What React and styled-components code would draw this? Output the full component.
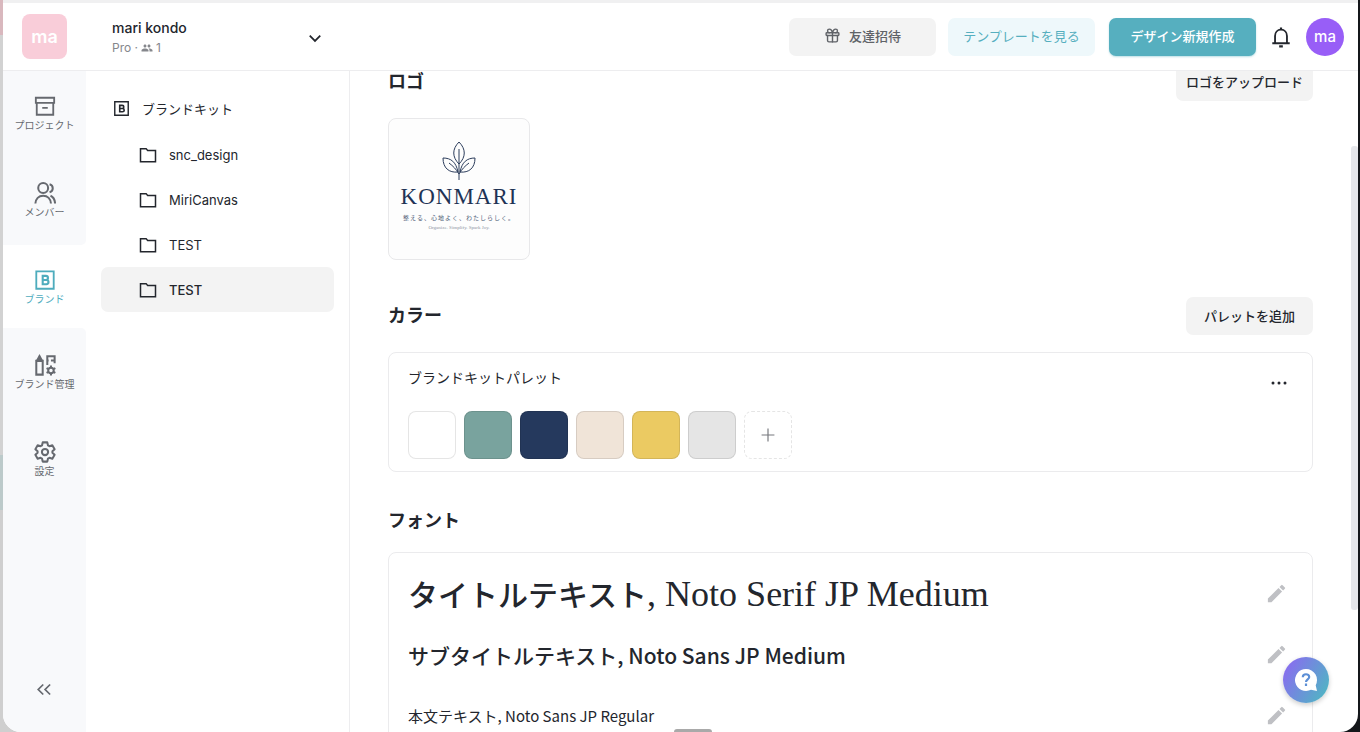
import React from 'react';
import styled, { createGlobalStyle, css } from 'styled-components';
import { LuGift } from 'react-icons/lu';
import { MdEdit, MdPeople } from 'react-icons/md';

const GlobalStyle = createGlobalStyle`
  * { box-sizing: border-box; }
  body {
    margin: 0;
    background: #cfcfcf;
    color: #23262d;
    font-family: Inter, "Noto Sans CJK JP", sans-serif;
    font-size: 14px;
  }
  button { font-family: inherit; border: 0; padding: 0; background: none; color: inherit; cursor: pointer; }
  a { color: inherit; text-decoration: none; }
  h2, p { margin: 0; }
  svg { display: block; flex: none; }
`

const Desktop = styled.div`
  height: 100vh;
  padding: 0 2px 0 3px;
  background: linear-gradient(to right, transparent 50%, #14161a 50%),
    linear-gradient(#d9b8be 0 35px, #d2d2d2 35px 455px, #bccaca 455px 510px, #cfcfcf 510px);
  overflow: hidden;
`

const Window = styled.div`
  position: relative;
  height: 100%;
  display: flex;
  flex-direction: column;
  background: #ffffff;
  border-radius: 0 0 18px 18px;
  overflow: hidden;
`

const Header = styled.header`
  flex: none;
  height: 71px;
  display: flex;
  align-items: center;
  padding: 0 14px 0 19px;
  border-top: 3px solid #f0f0f1;
  border-bottom: 1px solid #ededef;
`

const TeamBadge = styled.div`
  width: 45px;
  height: 45px;
  margin-right: 45px;
  border-radius: 8px;
  background: #f9cdd9;
  color: #ffffff;
  font-size: 18px;
  font-weight: 600;
  line-height: 45px;
  text-align: center;
`

const TeamButton = styled.button`
  width: 210px;
  display: flex;
  align-items: center;
  justify-content: space-between;
  padding-top: 3px;
  text-align: left;
`

const TeamName = styled.span`
  display: block;
  font-size: 14px;
  font-weight: 500;
  line-height: 20px;
`

const TeamPlan = styled.span`
  display: flex;
  align-items: center;
  gap: 3px;
  color: #85878c;
  font-size: 12px;
  line-height: 20px;
`

const HeaderActions = styled.div`
  display: flex;
  align-items: center;
  margin-left: auto;
`

const tones = {
  grey: css`background: #f3f3f3; color: #606368; margin-right: 12px;`,
  light: css`background: #eef8fb; color: #56afbf; margin-right: 14px;`,
  teal: css`background: #56afbf; color: #ffffff; margin-right: 14px; box-shadow: 0 1px 2px #56afbf66;`,
}

const HeaderButton = styled.button`
  width: 147px;
  height: 38px;
  display: flex;
  align-items: center;
  justify-content: center;
  gap: 8px;
  padding-bottom: 2px;
  border-radius: 7px;
  font-size: 13px;
  font-weight: ${({ $tone }) => ($tone === 'light' ? 400 : 500)};
  ${({ $tone }) => tones[$tone]}
`

const Avatar = styled.button`
  width: 38px;
  height: 38px;
  margin-left: 14px;
  border-radius: 50%;
  background: #985ef7;
  color: #ffffff;
  font-size: 15px;
  font-weight: 500;
`

const Body = styled.div`
  flex: 1;
  min-height: 0;
  display: flex;
`

const Rail = styled.nav`
  flex: none;
  width: 83px;
  display: flex;
  flex-direction: column;
`

const RailGroup = styled.div`
  background: #f8f9fb;
  ${({ $last }) => $last
    ? css`flex: 1; display: flex; flex-direction: column; padding-top: 2px; border-top-right-radius: 5px;`
    : css`border-bottom-right-radius: 5px;`}
`

const RailItem = styled.a`
  height: 87px;
  display: flex;
  flex-direction: column;
  align-items: center;
  padding-top: 24px;
  color: ${({ $active }) => ($active ? '#4eacbd' : '#66696f')};
  font-size: 10px;
  line-height: 16px;
  white-space: nowrap;
`

const ActiveGroup = styled.div`
  height: 83px;
`

const Collapse = styled.button`
  margin: auto auto 35px;
  color: #66696f;
`

const Folders = styled.nav`
  flex: none;
  width: 264px;
  padding: 16px 15px;
  border-right: 1px solid #ededef;
`

const FolderLink = styled.a`
  height: 45px;
  display: flex;
  align-items: center;
  gap: 12px;
  padding-left: ${({ $root }) => ($root ? 12 : 38)}px;
  padding-bottom: ${({ $root }) => ($root ? 2 : 0)}px;
  border-radius: 7px;
  background: ${({ $active }) => ($active ? '#f3f3f3' : 'transparent')};
  font-size: 13px;
  font-weight: ${({ $active }) => ($active ? 500 : 400)};
`

const Main = styled.main`
  flex: 1;
  min-width: 0;
  overflow: hidden;
  padding: 0 45px 0 38px;
`

/* the list is scrolled a little, so the first row runs under the header */
const Scrolled = styled.div`
  margin-top: -8px;
`

const SectionHead = styled.div`
  height: 38px;
  display: flex;
  align-items: center;
  justify-content: space-between;
`

const SectionTitle = styled.h2`
  font-size: 18px;
  font-weight: 700;
  line-height: 24px;
`

const SoftButton = styled.button`
  height: 38px;
  padding: 0 ${({ $wide }) => ($wide ? 18 : 10)}px 2px;
  border-radius: 7px;
  background: #f3f3f3;
  font-size: 13px;
  font-weight: 500;
`

const Card = styled.section`
  border: 1px solid #ebebed;
  border-radius: 8px;
  margin-bottom: 30px;
`

const LogoCard = styled.div`
  width: 142px;
  height: 142px;
  margin: 17px 0 37px;
  padding-top: 22px;
  display: flex;
  flex-direction: column;
  align-items: center;
  border: 1px solid #e8e8ea;
  border-radius: 8px;
  background: #fdfdfd;
  color: #1f3355;
  font-family: "Liberation Serif", "Noto Sans CJK JP", serif;
  white-space: nowrap;
`

const LogoName = styled.div`
  font-size: 23px;
  line-height: 32px;
  letter-spacing: 1px;
`

const LogoLine = styled.div`
  font-size: ${({ $small }) => ($small ? 5 : 6)}px;
  line-height: 10px;
  letter-spacing: ${({ $small }) => ($small ? 0 : 1)}px;
  color: ${({ $small }) => ($small ? '#8d94a3' : '#4a5874')};
`

const Palette = styled(Card)`
  height: 120px;
  margin-top: 17px;
  padding: 16px 19px 0;
`

const PaletteHead = styled.div`
  display: flex;
  align-items: flex-end;
  justify-content: space-between;
  height: 20px;
  line-height: 22px;
  margin-bottom: 22px;
  padding-right: 6px;
`

const MenuButton = styled.button`
  padding: 8px 0 4px;
`

const Swatches = styled.div`
  display: flex;
  gap: 8px;
`

const Swatch = styled.button`
  width: 48px;
  height: 48px;
  border: 1px solid #0000001a;
  border-radius: 8px;
  background: ${({ $color }) => $color};
`

const AddSwatch = styled(Swatch)`
  display: flex;
  align-items: center;
  justify-content: center;
  border-style: dashed;
  color: #77797e;
`

const FontCard = styled(Card)`
  margin-top: 12px;
  padding: 10px 19px 0;
`

const FontRow = styled.div`
  height: 61px;
  display: flex;
  align-items: center;
  justify-content: space-between;
  padding-right: 5px;
`

const fontSamples = {
  title: css`
    font-family: "Liberation Serif", "Noto Sans CJK JP", serif;
    font-size: 30px;
    font-weight: 500;
    padding-top: 3px;
  `,
  subtitle: css`font-size: 21px; font-weight: 500;`,
  body: css`font-size: 15px;`,
}

const FontName = styled.p`
  font-family: "Noto Sans CJK JP", sans-serif;
  line-height: 48px;
  white-space: nowrap;
  ${({ $kind }) => fontSamples[$kind]}
`

const Latin = styled.span`
  font-size: 36px;
`

const EditButton = styled.button`
  color: #bfc0c4;
`

const ScrollThumb = styled.div`
  position: absolute;
  top: 146px;
  right: 0;
  width: 7px;
  height: 464px;
  border-radius: 3px;
  background: #e5e6ea;
`

const BottomGrip = styled.div`
  position: absolute;
  left: 50%;
  bottom: 0;
  width: 38px;
  height: 3px;
  margin-left: -7px;
  border-radius: 3px 3px 0 0;
  background: #a9a9a9;
`

const HelpButton = styled.button`
  position: absolute;
  right: 29px;
  bottom: 29px;
  width: 46px;
  height: 46px;
  display: flex;
  align-items: center;
  justify-content: center;
  border-radius: 50%;
  background: linear-gradient(120deg, #8a6bf0 8%, #4fb6c3 92%);
  box-shadow: 0 2px 5px #00000033;
`

const Icon = ({ size = 20, children, ...rest }) => (
  <svg width={size} height={size} viewBox="0 0 24 24" fill="none" stroke="currentColor" strokeWidth="2" aria-hidden="true" {...rest}>
    {children}
  </svg>
)

const ArchiveIcon = () => (
  <Icon size={22}>
    <path d="M2 3h20v5.500H2zM3 8.500V21.500h18V8.500M9 14h6" />
  </Icon>
)

const MembersIcon = () => (
  <Icon size={22} strokeWidth="2.200">
    <circle cx="10" cy="6.500" r="5.400" />
    <path d="M1.500 23.500c.4-5 3.500-8.500 8.500-8.500s8.100 3.500 8.500 8.500M17 2.500c4.600 1.300 4.600 7.300 0 8.600M18 15c3 1.300 4.700 4 5 8.500" />
  </Icon>
)

const BrandIcon = ({ size }) => (
  <Icon size={size}>
    <path d="M2.500 2.500h19v19h-19z" />
    <path d="M9.500 7.500h3.500a2.200 2.200 0 0 1 0 4.500H9.500zM9.500 12h4a2.300 2.300 0 0 1 0 4.600h-4z" strokeWidth="2.300" />
  </Icon>
)

const ManageIcon = () => (
  <Icon size={22} strokeWidth="2.200">
    <path d="M2.500 7.500h7V22.500h-7z" />
    <path d="M1.800 7.500 6 0l4.200 7.500z" fill="currentColor" stroke="none" />
    <path d="M14.500 12V2.500h8V10M18.500 7h4M14 7h2" />
    <circle cx="18.500" cy="18" r="3" />
    <path d="M18.500 12.500v2.500M18.500 21v2.500M13.700 15.300l2.200 1.200M21.100 19.500l2.200 1.200M13.700 20.700l2.200-1.200M21.100 16.500l2.200-1.200" />
  </Icon>
)

const SettingsIcon = () => (
  <Icon size={22} strokeLinejoin="round" strokeWidth="2.200">
    <path d="M9.500 1.500h5l.7 3.200 1.700 1 3.100-1 2.500 4.300-2.400 2.200v1.600l2.400 2.200-2.500 4.300-3.100-1-1.700 1-.7 3.200h-5l-.7-3.200-1.700-1-3.100 1L1.500 15l2.400-2.200v-1.600L1.500 9 4 4.700l3.100 1 1.700-1z" />
    <circle cx="12" cy="12" r="3.400" />
  </Icon>
)

const FolderIcon = () => (
  <Icon size={18}>
    <path d="M2 3.500h7.500l2 2.500H22v15H2z" />
  </Icon>
)

const BellIcon = () => (
  <Icon size={22}>
    <path d="M5.500 18.500V11c0-4 2.500-7 6.500-7s6.500 3 6.500 7v7.500M2.500 18.800h19" />
    <path d="M12 1.500V4M10 22.200h4" strokeWidth="2.400" />
  </Icon>
)

const Sprig = () => (
  <svg width="34" height="40" viewBox="0 0 34 40" fill="none" stroke="#2b3c5b" strokeWidth="1" aria-hidden="true">
    <path d="M17 1c-7 7-7 15 0 22 7-7 7-15 0-22zM17 8v31" />
    <path d="M1 17c8 0 13 4 15 14C7 32 1 27 1 17zM7 22c4 3 7 6 10 11" />
    <path d="M33 17c-8 0-13 4-15 14 9 1 15-4 15-14zM27 22c-4 3-7 6-10 11" />
  </svg>
)

const folders = ['snc_design', 'MiriCanvas', 'TEST', 'TEST']
const colors = ['#ffffff', '#79a39e', '#25395d', '#f0e4d8', '#ebca62', '#e5e5e5']

const App = () => {
  return (
    <Desktop>
      <GlobalStyle />
      <Window>
        <Header>
          <TeamBadge>ma</TeamBadge>
          <TeamButton>
            <span>
              <TeamName>mari kondo</TeamName>
              <TeamPlan>Pro · <MdPeople size={12} /> 1</TeamPlan>
            </span>
            <Icon size={14} strokeWidth="3"><path d="m3 8 9 9 9-9" /></Icon>
          </TeamButton>
          <HeaderActions>
            <HeaderButton $tone="grey"><LuGift size={17} />友達招待</HeaderButton>
            <HeaderButton $tone="light">テンプレートを見る</HeaderButton>
            <HeaderButton $tone="teal">デザイン新規作成</HeaderButton>
            <button aria-label="通知"><BellIcon /></button>
            <Avatar>ma</Avatar>
          </HeaderActions>
        </Header>
        <Body>
          <Rail>
            <RailGroup>
              <RailItem href="#project"><ArchiveIcon />プロジェクト</RailItem>
              <RailItem href="#member"><MembersIcon />メンバー</RailItem>
            </RailGroup>
            <ActiveGroup>
              <RailItem href="#brand" $active><BrandIcon size={22} />ブランド</RailItem>
            </ActiveGroup>
            <RailGroup $last>
              <RailItem href="#manage"><ManageIcon />ブランド管理</RailItem>
              <RailItem href="#settings"><SettingsIcon />設定</RailItem>
              <Collapse aria-label="閉じる">
                <Icon size={15} strokeWidth="2.800"><path d="m10 4-8 8 8 8M21 4l-8 8 8 8" /></Icon>
              </Collapse>
            </RailGroup>
          </Rail>
          <Folders>
            <FolderLink href="#kit" $root><BrandIcon size={17} />ブランドキット</FolderLink>
            {folders.map((name, i) => (
              <FolderLink key={i} href="#folder" $active={i === 3}><FolderIcon />{name}</FolderLink>
            ))}
          </Folders>
          <Main>
            <Scrolled>
              <SectionHead>
                <SectionTitle>ロゴ</SectionTitle>
                <SoftButton>ロゴをアップロード</SoftButton>
              </SectionHead>
              <LogoCard>
                <Sprig />
                <LogoName>KONMARI</LogoName>
                <LogoLine>整える、心地よく、わたしらしく。</LogoLine>
                <LogoLine $small>Organize. Simplify. Spark Joy.</LogoLine>
              </LogoCard>
              <SectionHead>
                <SectionTitle>カラー</SectionTitle>
                <SoftButton $wide>パレットを追加</SoftButton>
              </SectionHead>
              <Palette>
                <PaletteHead>
                  <span>ブランドキットパレット</span>
                  <MenuButton aria-label="メニュー">
                    <svg width="16" height="4" viewBox="0 0 16 4" fill="currentColor">
                      <circle cx="2" cy="2" r="1.500" />
                      <circle cx="8" cy="2" r="1.500" />
                      <circle cx="14" cy="2" r="1.500" />
                    </svg>
                  </MenuButton>
                </PaletteHead>
                <Swatches>
                  {colors.map((c) => <Swatch key={c} $color={c} aria-label={c} />)}
                  <AddSwatch $color="#ffffff" aria-label="追加">
                    <Icon size={14}><path d="M12 1v22M1 12h22" /></Icon>
                  </AddSwatch>
                </Swatches>
              </Palette>
              <SectionHead>
                <SectionTitle>フォント</SectionTitle>
              </SectionHead>
              <FontCard>
                <FontRow>
                  <FontName $kind="title">タイトルテキスト<Latin>, Noto Serif JP Medium</Latin></FontName>
                  <EditButton aria-label="編集"><MdEdit size={23} /></EditButton>
                </FontRow>
                <FontRow>
                  <FontName $kind="subtitle">サブタイトルテキスト, Noto Sans JP Medium</FontName>
                  <EditButton aria-label="編集"><MdEdit size={23} /></EditButton>
                </FontRow>
                <FontRow>
                  <FontName $kind="body">本文テキスト, Noto Sans JP Regular</FontName>
                  <EditButton aria-label="編集"><MdEdit size={23} /></EditButton>
                </FontRow>
              </FontCard>
            </Scrolled>
          </Main>
        </Body>
        <ScrollThumb />
        <BottomGrip />
        <HelpButton aria-label="ヘルプ">
          <svg width="24" height="24" viewBox="0 0 24 24" aria-hidden="true">
            <path d="M12 1a11 11 0 1 0 5 20.800l6 1.200-1.300-5.800A11 11 0 0 0 12 1z" fill="#ffffff" />
            <path d="M8.800 9.300c0-4 6.400-4 6.400-.2 0 2.200-3.200 2.500-3.200 5M12 15.500V18" fill="none" stroke="#5d8fd6" strokeWidth="2.200" />
          </svg>
        </HelpButton>
      </Window>
    </Desktop>
  )
}

export default App
